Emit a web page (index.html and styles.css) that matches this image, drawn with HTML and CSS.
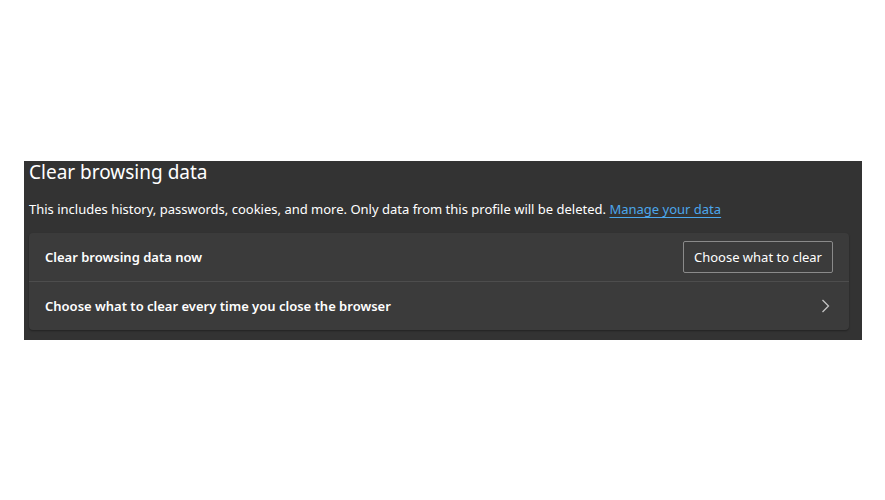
FILE: index.html
```html
<!DOCTYPE html>
<html>
<head>
<meta charset="utf-8">
<link rel="stylesheet" href="styles.css">
</head>
<body>
<div class="page">
  <section class="panel">
    <h2 class="title">Clear browsing data</h2>
    <p class="desc">This includes history, passwords, cookies, and more. Only data from this profile will be deleted. <a class="link" href="#">Manage your data</a></p>
    <div class="card">
      <div class="row">
        <span class="row-label">Clear browsing data now</span>
        <button class="btn">Choose what to clear</button>
      </div>
      <div class="row row-link">
        <span class="row-label">Choose what to clear every time you close the browser</span>
        <svg class="chev" width="10" height="16" viewBox="0 0 10 16"><path d="M2.5 2 L8.5 8 L2.5 14" fill="none" stroke="#c4c4c4" stroke-width="1.3"/></svg>
      </div>
    </div>
  </section>
</div>
</body>
</html>
```

FILE: styles.css
```css
html, body { margin: 0; padding: 0; background: #ffffff; }
body { font-family: "Noto Sans", "Open Sans", sans-serif; }
.page { padding-top: 161px; padding-left: 24px; width: 838px; }
.panel {
  background: #333333;
  height: 179px;
  padding: 0 13px 0 5px;
  box-sizing: border-box;
  color: #ffffff;
}
.title {
  margin: 0;
  font-size: 19px;
  font-weight: 400;
  line-height: 22px;
}
.desc {
  margin: 0;
  padding-top: 16px;
  font-size: 13px;
  line-height: 20px;
  height: 50px;
  box-sizing: border-box;
}
.link { color: #4ca7ec; text-decoration: underline; text-underline-offset: 3px; }
.card {
  background: #3b3b3b;
  border-radius: 4px;
  box-shadow: 0 1px 2px rgba(0,0,0,0.35);
}
.row {
  height: 48px;
  display: flex;
  align-items: center;
  justify-content: space-between;
  padding: 0 16px;
}
.row + .row { border-top: 1px solid #4d4d4d; }
.row-label { font-size: 13px; font-weight: 600; }
.btn {
  font-family: inherit;
  font-size: 13px;
  color: #ffffff;
  background: #3b3b3b;
  border: 1px solid #8a8a8a;
  border-radius: 2px;
  height: 32px;
  padding: 0 10px;
}
.chev { margin-right: 3px; }
```
